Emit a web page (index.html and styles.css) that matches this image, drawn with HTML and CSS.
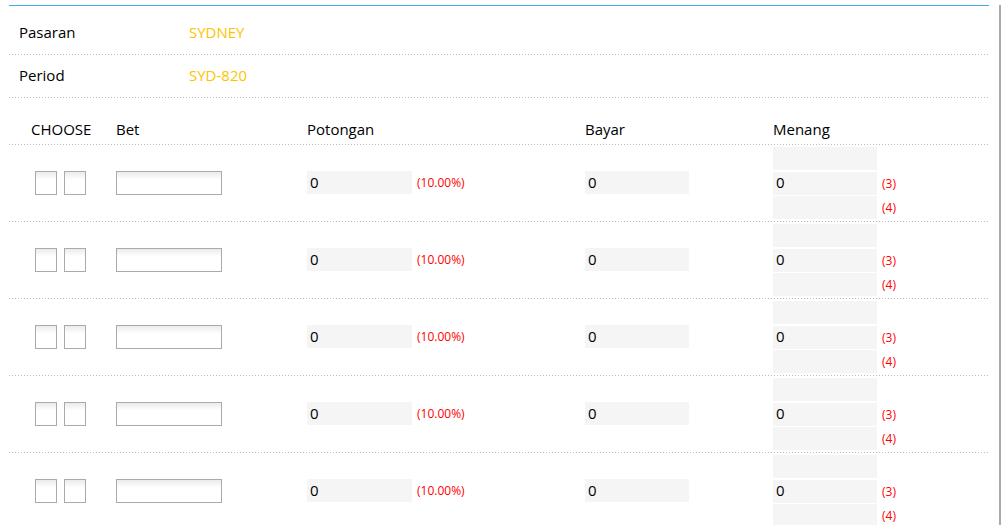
FILE: index.html
```html
<!DOCTYPE html>
<html lang="id">

<head>
  <meta charset="UTF-8">
  <meta name="viewport" content="width=device-width, initial-scale=1.0">
  <title>Bet 2D</title>
  <link rel="stylesheet" href="styles.css">
</head>

<body>
  <div class="page">
    <div class="panel">
      <div class="info-row">
        <span class="info-label">Pasaran</span>
        <span class="info-value">SYDNEY</span>
      </div>
      <div class="info-row">
        <span class="info-label">Period</span>
        <span class="info-value">SYD-820</span>
      </div>

      <div class="bet-head">
        <span class="head-choose">CHOOSE</span>
        <span>Bet</span>
        <span>Potongan</span>
        <span>Bayar</span>
        <span>Menang</span>
      </div>

      <div class="bet-row">
        <div class="choose">
          <input type="text" class="pick" maxlength="1">
          <input type="text" class="pick" maxlength="1">
        </div>
        <div><input type="text" class="bet-input"></div>
        <div class="calc">
          <input type="text" class="field field-wide" value="0" readonly>
          <span class="note">(10.00%)</span>
        </div>
        <div class="calc"><input type="text" class="field" value="0" readonly></div>
        <div class="win-list">
          <div class="win-line"><input type="text" class="field" readonly></div>
          <div class="win-line"><input type="text" class="field" value="0" readonly><span class="note">(3)</span></div>
          <div class="win-line"><input type="text" class="field" readonly><span class="note">(4)</span></div>
        </div>
      </div>

      <div class="bet-row">
        <div class="choose">
          <input type="text" class="pick" maxlength="1">
          <input type="text" class="pick" maxlength="1">
        </div>
        <div><input type="text" class="bet-input"></div>
        <div class="calc">
          <input type="text" class="field field-wide" value="0" readonly>
          <span class="note">(10.00%)</span>
        </div>
        <div class="calc"><input type="text" class="field" value="0" readonly></div>
        <div class="win-list">
          <div class="win-line"><input type="text" class="field" readonly></div>
          <div class="win-line"><input type="text" class="field" value="0" readonly><span class="note">(3)</span></div>
          <div class="win-line"><input type="text" class="field" readonly><span class="note">(4)</span></div>
        </div>
      </div>

      <div class="bet-row">
        <div class="choose">
          <input type="text" class="pick" maxlength="1">
          <input type="text" class="pick" maxlength="1">
        </div>
        <div><input type="text" class="bet-input"></div>
        <div class="calc">
          <input type="text" class="field field-wide" value="0" readonly>
          <span class="note">(10.00%)</span>
        </div>
        <div class="calc"><input type="text" class="field" value="0" readonly></div>
        <div class="win-list">
          <div class="win-line"><input type="text" class="field" readonly></div>
          <div class="win-line"><input type="text" class="field" value="0" readonly><span class="note">(3)</span></div>
          <div class="win-line"><input type="text" class="field" readonly><span class="note">(4)</span></div>
        </div>
      </div>

      <div class="bet-row">
        <div class="choose">
          <input type="text" class="pick" maxlength="1">
          <input type="text" class="pick" maxlength="1">
        </div>
        <div><input type="text" class="bet-input"></div>
        <div class="calc">
          <input type="text" class="field field-wide" value="0" readonly>
          <span class="note">(10.00%)</span>
        </div>
        <div class="calc"><input type="text" class="field" value="0" readonly></div>
        <div class="win-list">
          <div class="win-line"><input type="text" class="field" readonly></div>
          <div class="win-line"><input type="text" class="field" value="0" readonly><span class="note">(3)</span></div>
          <div class="win-line"><input type="text" class="field" readonly><span class="note">(4)</span></div>
        </div>
      </div>

      <div class="bet-row">
        <div class="choose">
          <input type="text" class="pick" maxlength="1">
          <input type="text" class="pick" maxlength="1">
        </div>
        <div><input type="text" class="bet-input"></div>
        <div class="calc">
          <input type="text" class="field field-wide" value="0" readonly>
          <span class="note">(10.00%)</span>
        </div>
        <div class="calc"><input type="text" class="field" value="0" readonly></div>
        <div class="win-list">
          <div class="win-line"><input type="text" class="field" readonly></div>
          <div class="win-line"><input type="text" class="field" value="0" readonly><span class="note">(3)</span></div>
          <div class="win-line"><input type="text" class="field" readonly><span class="note">(4)</span></div>
        </div>
      </div>
    </div>
  </div>
</body>

</html>
```

FILE: styles.css
```css
* {
  margin: 0;
  padding: 0;
  box-sizing: border-box;
}

html,
body {
  overflow: hidden;
}

body {
  font-family: 'Open Sans', 'Noto Sans', sans-serif;
  font-size: 15px;
  color: #000;
  background: #fff;
}

.page {
  width: 1001px;
  min-height: 525px;
  border-right: 2px solid #aaa;
}

.panel {
  width: 980px;
  margin: 5px 0 0 9px;
  padding-top: 6px;
  border-top: 1px solid #45abe5;
}

/* dotted separator under every line */
.info-row,
.bet-head,
.bet-row {
  padding-bottom: 1px;
  background: linear-gradient(to right, #bbb 1px, transparent 1px) left bottom / 3px 1px repeat-x;
}

.info-row {
  display: flex;
  align-items: center;
  height: 43px;
  padding-left: 10px;
  padding-bottom: 3px;
}

.info-label {
  width: 170px;
}

.info-value {
  color: #fcc400;
}

.bet-head,
.bet-row {
  display: grid;
  grid-template-columns: 90px 191px 278px 188px 1fr;
  padding-left: 17px;
}

.bet-head {
  padding-top: 21px;
  padding-bottom: 6px;
  line-height: 20px;
}

.head-choose {
  padding-left: 5px;
}

.bet-row {
  align-items: center;
  height: 77px;
  padding-bottom: 2px;
}

.choose {
  display: flex;
  gap: 7px;
  padding-left: 9px;
}

.pick,
.bet-input {
  height: 24px;
  border: 1px solid #aaa;
  background: linear-gradient(to bottom, #ebebeb 0, #fff 35%);
  font-family: inherit;
  font-size: 15px;
  outline: none;
}

.pick {
  width: 22px;
  text-align: center;
}

.bet-input {
  width: 106px;
  padding: 0 3px;
}

.calc {
  display: flex;
  align-items: center;
}

.field {
  width: 104px;
  height: 23px;
  padding: 0 3px 2px;
  border: none;
  background: #f5f5f5;
  font-family: inherit;
  font-size: 15px;
  color: #000;
  outline: none;
}

.field-wide {
  width: 105px;
}

.note {
  margin-left: 5px;
  font-size: 12px;
  color: #f00;
}

.win-list {
  display: flex;
  flex-direction: column;
  gap: 1px;
}

.win-line:first-child {
  margin-bottom: 1px;
}

.win-line {
  display: flex;
  align-items: center;
}
```
